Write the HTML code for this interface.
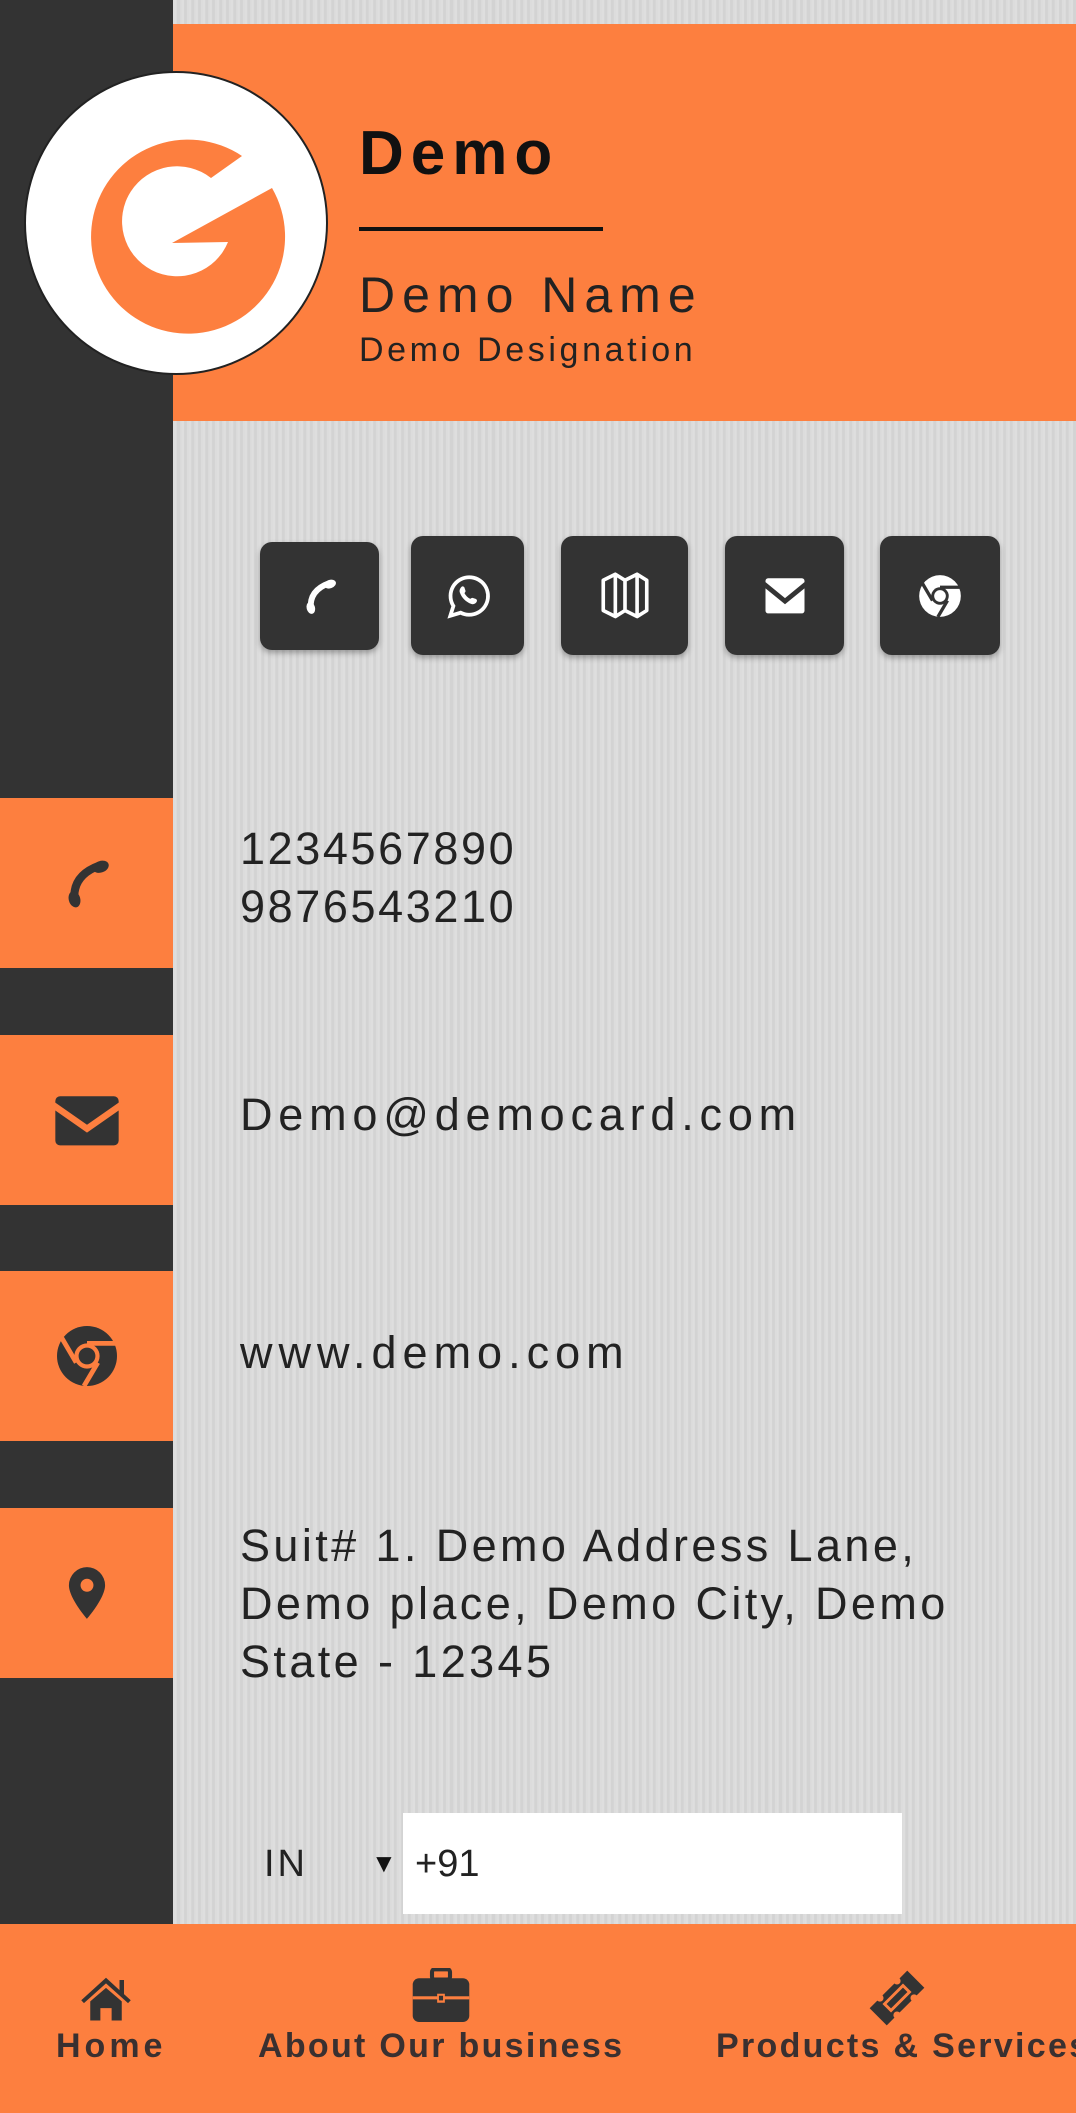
<!DOCTYPE html>
<html><head><meta charset="utf-8"><style>
*{margin:0;padding:0;box-sizing:border-box}
body{width:1076px;height:2113px;position:relative;overflow:hidden;font-family:"Liberation Sans",sans-serif;background:#dadada;background-image:repeating-linear-gradient(90deg,rgba(255,255,255,.12) 0 2px,rgba(0,0,0,.03) 2px 5px,rgba(255,255,255,.06) 5px 7px)}
.abs{position:absolute}
.side{left:0;top:0;width:173px;height:1924px;background:#333}
.hdr{left:173px;top:24px;width:903px;height:397px;background:#fd7f3f}
.logo{left:24px;top:71px;width:304px;height:304px;border-radius:50%;background:#fff;border:2px solid #222}
.btn{background:#333;border-radius:12px;box-shadow:0 3px 6px rgba(0,0,0,.3);display:flex;align-items:center;justify-content:center}
.ob{left:0;width:173px;height:170px;background:#fd7f3f;display:flex;align-items:center;justify-content:center}
.t{left:240px;color:#222;font-size:45px;line-height:58px;white-space:nowrap}
.nav{left:0;top:1924px;width:1076px;height:189px;background:#fd7f3f}
.nl{font-size:34px;font-weight:bold;color:#3a3030;top:2027px;white-space:nowrap}
</style></head><body>
<div class="abs side"></div>
<div class="abs hdr"></div>
<div class="abs logo"></div>
<svg class="abs" style="left:0;top:0" width="400" height="420">
<path fill="#fd7f3f" d="M242 156 A97 97 0 1 0 272 188 L172 243 L228 242 A55 55 0 1 1 211 178 Z"/>
</svg>
<div class="abs" style="left:359px;top:118px;font-size:62px;font-weight:bold;color:#111;letter-spacing:7px">Demo</div>
<div class="abs" style="left:359px;top:227px;width:244px;height:4px;background:#111"></div>
<div class="abs" style="left:359px;top:266px;font-size:50px;color:#222;letter-spacing:7px">Demo Name</div>
<div class="abs" style="left:359px;top:331px;font-size:34px;color:#222;letter-spacing:3.6px">Demo Designation</div>

<div class="abs btn" style="left:260px;top:542px;width:119px;height:108px"><svg width="44" height="44" viewBox="0 0 24 24"><path d="M7 19 Q6 9 17 5" fill="none" stroke="#fff" stroke-width="3.2" stroke-linecap="round"/><ellipse cx="7" cy="18.5" rx="2.3" ry="3.3" fill="#fff" transform="rotate(-15 7 18.5)"/><ellipse cx="17.5" cy="5.5" rx="3.3" ry="2.3" fill="#fff" transform="rotate(-20 17.5 5.5)"/></svg></div>
<div class="abs btn" style="left:411px;top:536px;width:113px;height:119px"><svg width="50" height="50" viewBox="0 0 24 24"><path fill="none" stroke="#fff" stroke-width="1.8" d="M3.5 21.5l1.5-4.7A9 9 0 1 1 8.5 20z"/><path fill="#fff" d="M9 7.5c.5-.3 1.2 0 1.3.5l.5 1.5c.1.4-.2.8-.5 1.1.6 1.2 1.6 2.2 2.8 2.8.3-.3.7-.6 1.1-.5l1.5.5c.5.2.8.8.5 1.3-.5 1-1.6 1.5-2.7 1.1-2.5-.9-4.5-2.9-5.4-5.4-.4-1.1.1-2.2.9-2.9z"/></svg></div>
<div class="abs btn" style="left:561px;top:536px;width:127px;height:119px"><svg width="58" height="58" viewBox="0 0 24 24"><path fill="none" stroke="#fff" stroke-width="1.5" stroke-linejoin="round" d="M3 5.5l5-2.5 4 2.5 5-2.5 4 2.5V18l-4 2.5-5-2.5-4 2.5-5-2.5zM8 3v17.5M12 5.5V18M17 3v17.5"/></svg></div>
<div class="abs btn" style="left:725px;top:536px;width:119px;height:119px"><svg width="52" height="52" viewBox="0 0 24 24"><path fill="#fff" d="M3 5a1.2 1.2 0 0 1 1.2-1.2h15.6A1.2 1.2 0 0 1 21 5v.6l-9 7.4-9-7.4zM3 8.5l9 7.3 9-7.3v10.3a1.2 1.2 0 0 1-1.2 1.2H4.2A1.2 1.2 0 0 1 3 18.8z"/></svg></div>
<div class="abs btn" style="left:880px;top:536px;width:120px;height:119px"><svg width="50" height="50" viewBox="0 0 24 24"><circle cx="12" cy="12" r="10" fill="#fff"/><circle cx="12" cy="12" r="4.2" fill="#333"/><circle cx="12" cy="12" r="2.8" fill="#fff"/><path stroke="#333" stroke-width="1.6" fill="none" d="M12 7.8h9.5M8.4 14.2L3.6 6M15.6 14.2L11 22"/></svg></div>

<div class="abs ob" style="top:798px"><svg width="60" height="60" viewBox="0 0 24 24"><path d="M7 19 Q6 9 17 5" fill="none" stroke="#333" stroke-width="3.2" stroke-linecap="round"/><ellipse cx="7" cy="18.5" rx="2.3" ry="3.3" fill="#333" transform="rotate(-15 7 18.5)"/><ellipse cx="17.5" cy="5.5" rx="3.3" ry="2.3" fill="#333" transform="rotate(-20 17.5 5.5)"/></svg></div>
<div class="abs ob" style="top:1035px"><svg width="76" height="76" viewBox="0 0 24 24"><path fill="#333" d="M2 6a1.5 1.5 0 0 1 1.5-1.5h17A1.5 1.5 0 0 1 22 6v.5l-10 7-10-7zM2 9l10 7 10-7v9.5a1.5 1.5 0 0 1-1.5 1.5h-17A1.5 1.5 0 0 1 2 18.5z"/></svg></div>
<div class="abs ob" style="top:1271px"><svg width="72" height="72" viewBox="0 0 24 24"><circle cx="12" cy="12" r="10" fill="#333"/><circle cx="12" cy="12" r="4.2" fill="#fd7f3f"/><circle cx="12" cy="12" r="2.8" fill="#333"/><path stroke="#fd7f3f" stroke-width="1.6" fill="none" d="M12 7.8h9.5M8.4 14.2L3.6 6M15.6 14.2L11 22"/></svg></div>
<div class="abs ob" style="top:1508px"><svg width="62" height="62" viewBox="0 0 24 24"><path fill="#333" d="M12 2a7 7 0 0 0-7 7c0 5 7 13 7 13s7-8 7-13a7 7 0 0 0-7-7zm0 9.5A2.5 2.5 0 1 1 12 6.5a2.5 2.5 0 0 1 0 5z"/></svg></div>

<div class="abs t" style="top:820px;letter-spacing:2.6px">1234567890<br>9876543210</div>
<div class="abs t" style="top:1086px;letter-spacing:5.8px">Demo@democard.com</div>
<div class="abs t" style="top:1324px;letter-spacing:6px">www.demo.com</div>
<div class="abs t" style="top:1517px;letter-spacing:3.4px">Suit# 1. Demo Address Lane,<br>Demo place, Demo City, Demo<br>State - 12345</div>

<div class="abs" style="left:264px;top:1843px;font-size:38px;color:#222;letter-spacing:3px">IN</div>
<div class="abs" style="left:371px;top:1848px;font-size:26px;color:#111">▼</div>
<div class="abs" style="left:403px;top:1813px;width:499px;height:101px;background:#fff"></div>
<div class="abs" style="left:415px;top:1843px;font-size:38px;color:#222">+91</div>

<div class="abs nav"></div>
<svg class="abs" style="left:79px;top:1975px" width="54" height="46" viewBox="0 0 24 20"><path fill="#333" d="M12 1L1 11l1.2 1.3L12 3.5l9.8 8.8L23 11l-3-2.7V2h-2v4.5z"/><path fill="#333" d="M5 11.5L12 5.5l7 6V20h-4.5v-5.5h-5V20H5z"/></svg>
<svg class="abs" style="left:410px;top:1968px" width="62" height="54" viewBox="0 0 24 21"><rect x="8.5" y="0.5" width="7" height="4" rx="1" fill="none" stroke="#333" stroke-width="1.6"/><rect x="1" y="4" width="22" height="17" rx="2.5" fill="#333"/><rect x="1" y="11" width="22" height="1.2" fill="#fd7f3f"/><rect x="10.5" y="10" width="3" height="3.5" fill="#fd7f3f"/><rect x="11.2" y="10.8" width="1.6" height="1.8" fill="#333"/></svg>
<svg class="abs" style="left:868px;top:1968px" width="58" height="60" viewBox="0 0 24 24"><g transform="rotate(45 12 12)"><path fill="#333" d="M7 1h10v4.5a1.5 1.5 0 0 0 0 3v7a1.5 1.5 0 0 0 0 3V23H7v-4.5a1.5 1.5 0 0 0 0-3v-7a1.5 1.5 0 0 0 0-3z"/><rect x="9.5" y="6" width="5" height="12" fill="#fd7f3f"/><rect x="10.7" y="7.2" width="2.6" height="9.6" fill="#333"/></g></svg>
<div class="abs nl" style="left:56px;letter-spacing:4px">Home</div>
<div class="abs nl" style="left:258px;letter-spacing:2.3px">About Our business</div>
<div class="abs nl" style="left:716px;letter-spacing:2.3px">Products &amp; Services</div>
</body></html>
